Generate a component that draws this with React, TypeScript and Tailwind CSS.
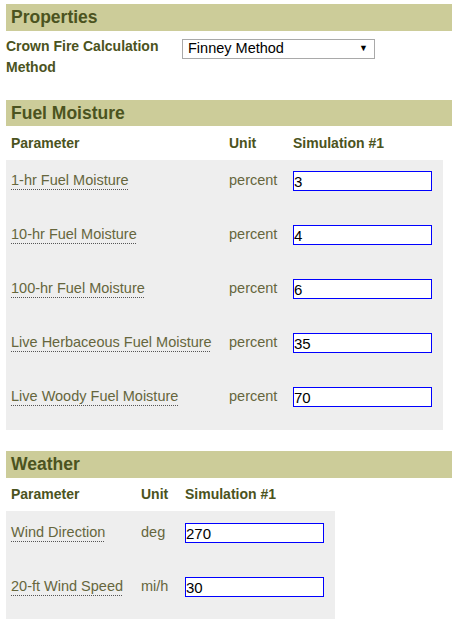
const font = { fontFamily: '"Liberation Sans", Arial, sans-serif' };

const link =
  "text-[#66663d] underline decoration-dotted decoration-[#555] underline-offset-[4px] decoration-1";
const input =
  "h-5 border border-[#0000ff] bg-white px-0 text-[15px] leading-[18px] text-black outline-none";

function SectionHeader({ title, h }: { title: string; h: string }) {
  return (
    <div className={`flex ${h} items-center bg-[#cccc99] pl-[5px]`}>
      <h2 className="text-[17.5px] font-bold text-[#4b5320]">{title}</h2>
    </div>
  );
}

const fuel = [
  { name: "1-hr Fuel Moisture", value: "3" },
  { name: "10-hr Fuel Moisture", value: "4" },
  { name: "100-hr Fuel Moisture", value: "6" },
  { name: "Live Herbaceous Fuel Moisture", value: "35" },
  { name: "Live Woody Fuel Moisture", value: "70" },
];

const weather = [
  { name: "Wind Direction", unit: "deg", value: "270" },
  { name: "20-ft Wind Speed", unit: "mi/h", value: "30" },
];

export default function App() {
  return (
    <div className="min-h-screen bg-white pt-[4px] pl-[6px] text-[14.5px]" style={font}>
      <SectionHeader title="Properties" h="h-[27px]" />
      <div className="flex pt-[5px]">
        <div className="w-[176px] text-[14px] font-bold leading-[21px] text-[#4b5320]">
          Crown Fire Calculation Method
        </div>
        <div className="mt-[3px] flex h-[20px] w-[193px] items-center justify-between border border-[#a9a9a9] bg-white pl-[5px] pr-[6px]">
          <span className="text-[14.5px] text-black">Finney Method</span>
          <span className="text-[9px] text-black">▼</span>
        </div>
      </div>

      <div className="mt-[22px]">
        <SectionHeader title="Fuel Moisture" h="h-[26px]" />
      </div>
      <div className="w-[437px]">
        <div className="flex h-[34px] items-center pl-[5px] text-[14px] font-bold text-[#4b5320]">
          <span className="w-[218px]">Parameter</span>
          <span className="w-[64px]">Unit</span>
          <span>Simulation #1</span>
        </div>
        <div className="bg-[#eeeeee]">
          {fuel.map((r) => (
            <div key={r.name} className="flex h-[54px] items-start pl-[5px] pt-[11px]">
              <div className="flex h-5 w-[218px] items-center">
                <span className={link}>{r.name}</span>
              </div>
              <div className="flex h-5 w-[64px] items-center text-[#66663d]">percent</div>
              <input className={`${input} w-[139px]`} defaultValue={r.value} />
            </div>
          ))}
        </div>
      </div>

      <div className="mt-[21px]">
        <SectionHeader title="Weather" h="h-[27px]" />
      </div>
      <div className="w-[329px]">
        <div className="flex h-[33px] items-center pl-[5px] text-[14px] font-bold text-[#4b5320]">
          <span className="w-[130px]">Parameter</span>
          <span className="w-[44px]">Unit</span>
          <span>Simulation #1</span>
        </div>
        <div className="bg-[#eeeeee]">
          {weather.map((r) => (
            <div key={r.name} className="flex h-[54px] items-start pl-[5px] pt-[12px]">
              <div className="flex h-5 w-[130px] items-center">
                <span className={link}>{r.name}</span>
              </div>
              <div className="flex h-5 w-[44px] items-center text-[#66663d]">{r.unit}</div>
              <input className={`${input} w-[139px]`} defaultValue={r.value} />
            </div>
          ))}
        </div>
      </div>
    </div>
  );
}
